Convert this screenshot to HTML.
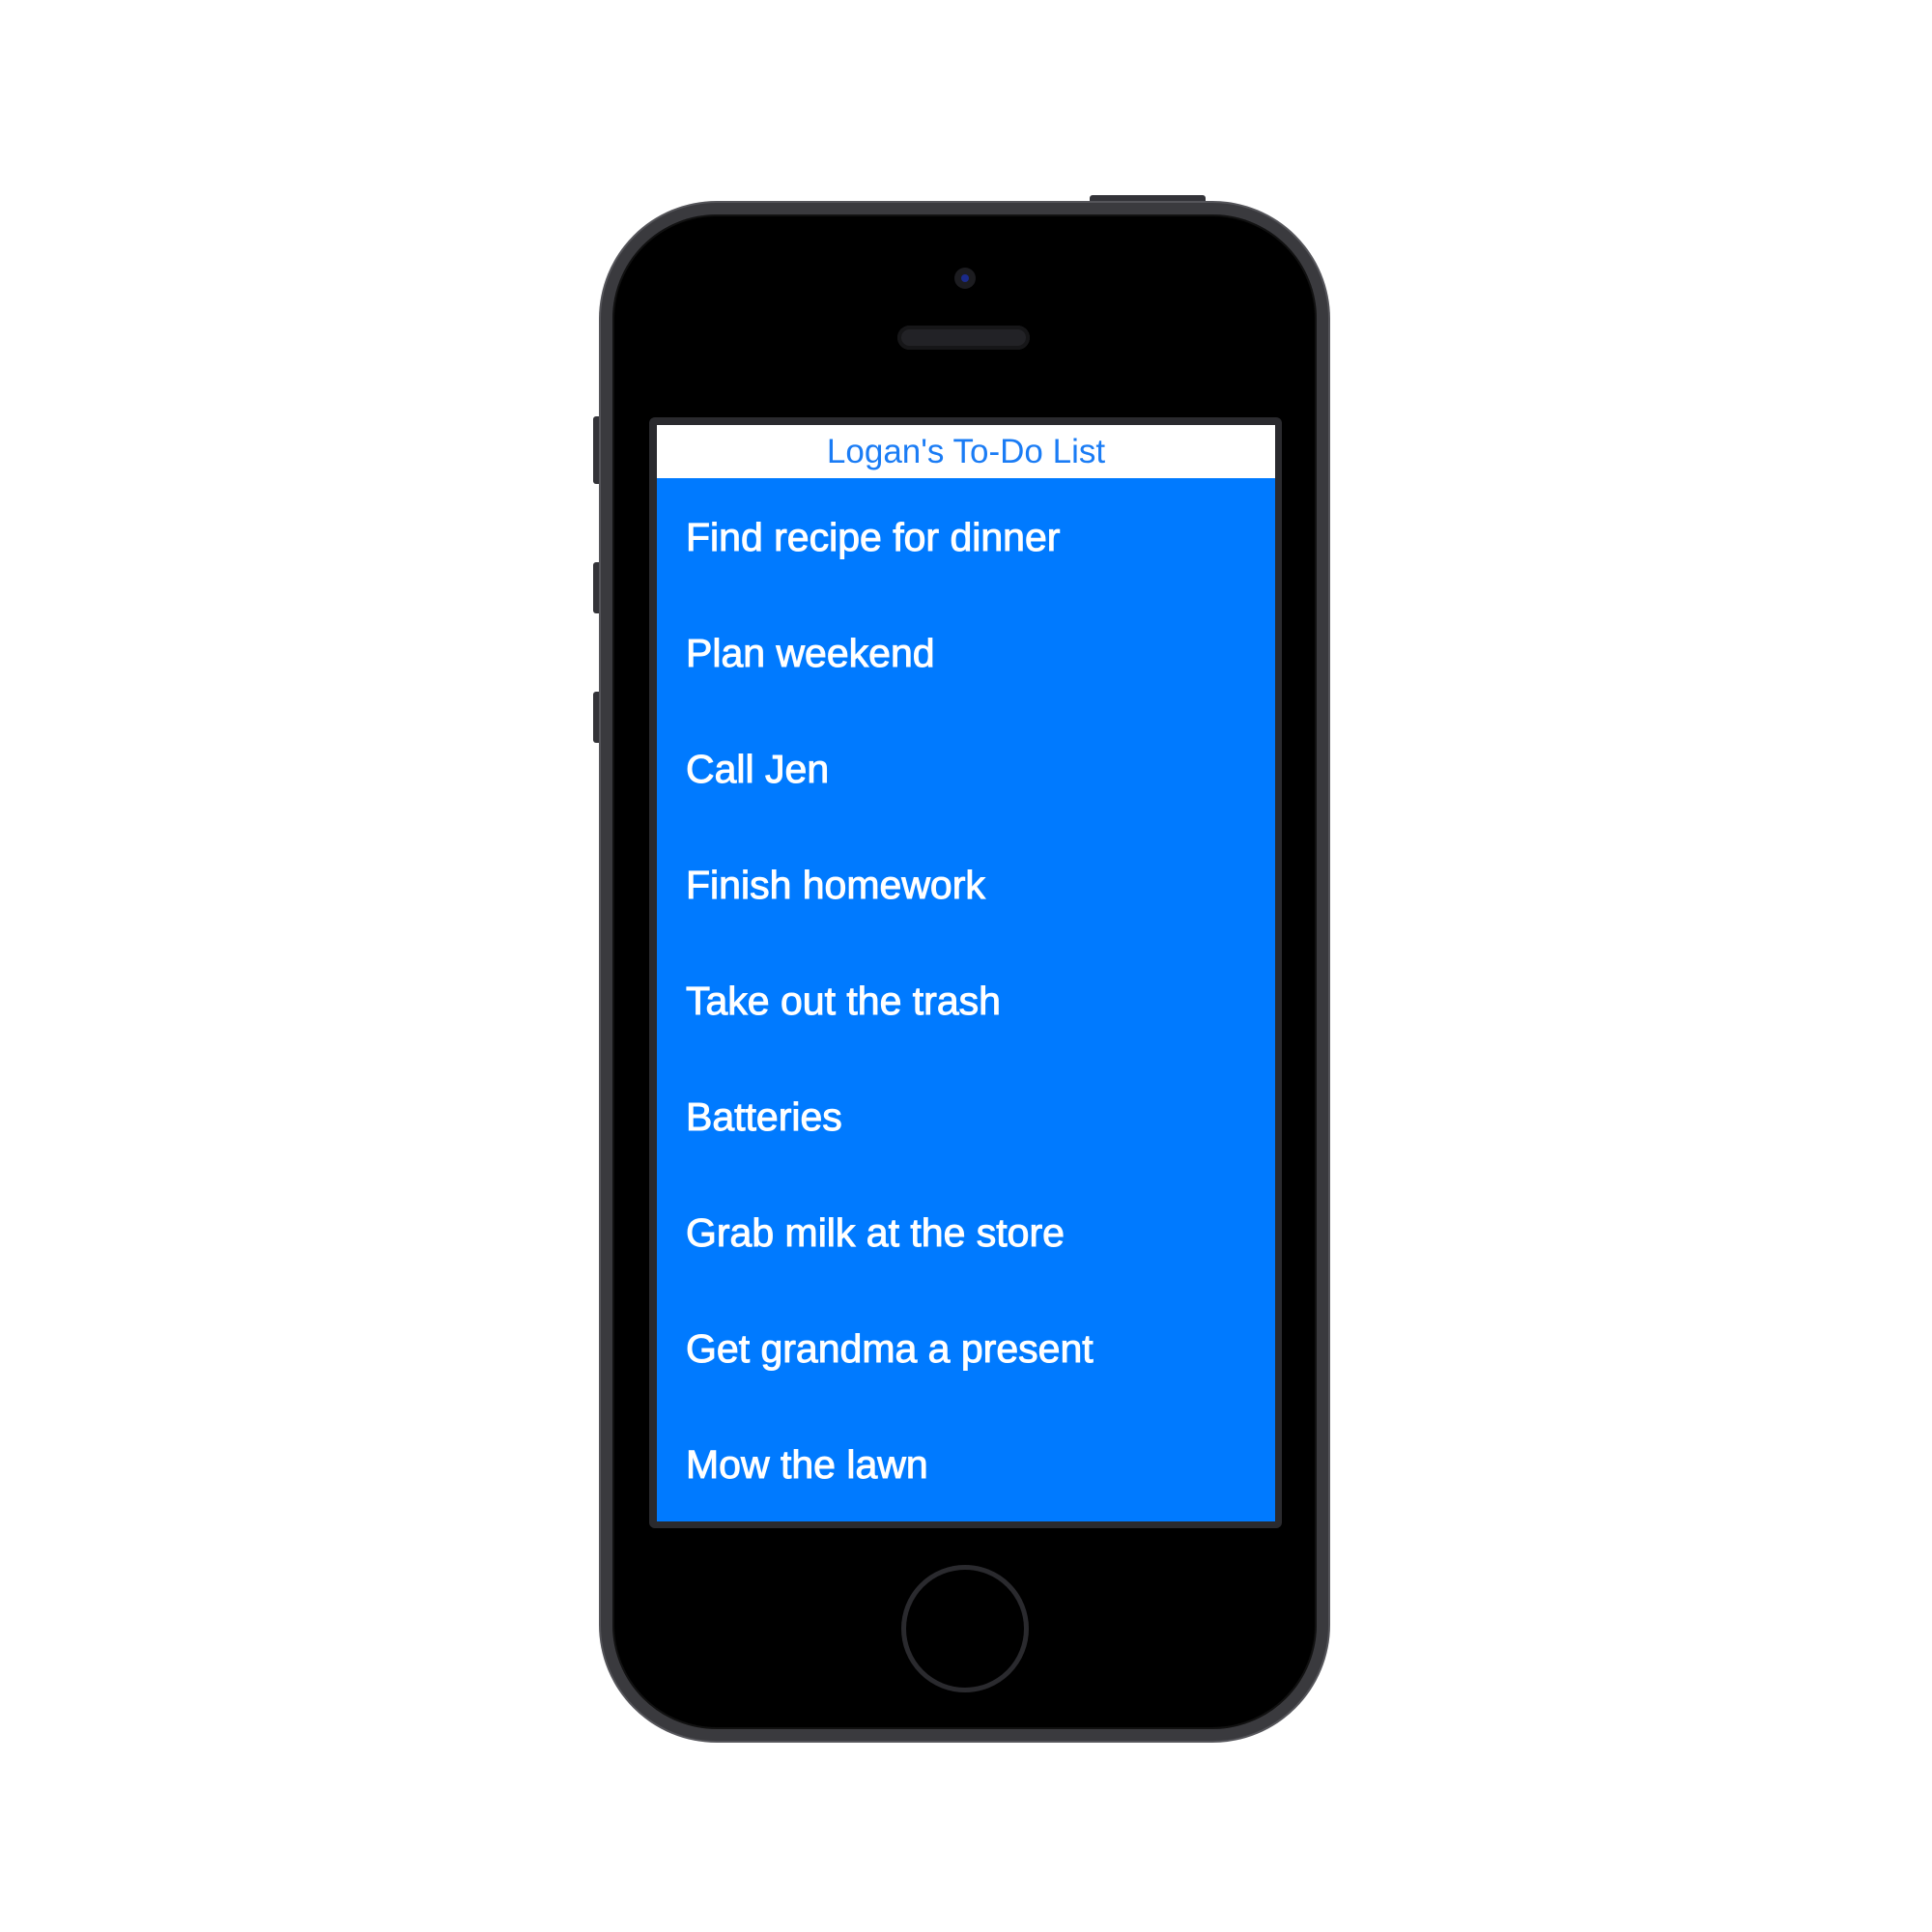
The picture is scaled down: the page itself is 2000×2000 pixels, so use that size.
<!DOCTYPE html>
<html><head><style>
html,body{margin:0;padding:0;background:#fff;width:2000px;height:2000px;overflow:hidden;font-family:"Liberation Sans",sans-serif}
.abs{position:absolute}
.phone{left:622px;top:210px;width:753px;height:1592px;border-radius:120px;background:#000;box-sizing:border-box;border:12px solid #3a3a3e;box-shadow:inset 0 0 0 2px #111, 0 0 0 2px #55555a}
.btn{background:#333338;border-radius:3px}
.bezel{left:672px;top:432px;width:655px;height:1150px;background:#2a2a2e;border-radius:6px}
.screen{left:680px;top:440px;width:640px;height:1135px;background:#007aff;overflow:hidden}
.hdr{left:0;top:0;width:640px;height:55px;background:#fff;color:#1a7cf5;font-size:35px;text-align:center;line-height:55px}
.item{left:30px;color:#fff;font-size:41px;line-height:50px;-webkit-text-stroke:1px #fff;white-space:nowrap}
</style></head><body>
<div class="abs btn" style="left:1128px;top:202px;width:120px;height:12px"></div>
<div class="abs btn" style="left:614px;top:431px;width:12px;height:70px"></div>
<div class="abs btn" style="left:614px;top:582px;width:12px;height:53px"></div>
<div class="abs btn" style="left:614px;top:716px;width:12px;height:53px"></div>
<div class="abs phone"></div>
<div class="abs" style="left:988px;top:277px;width:22px;height:22px;border-radius:50%;background:#1c1c20"></div>
<div class="abs" style="left:995px;top:284px;width:8px;height:8px;border-radius:50%;background:#1a2a8a"></div>
<div class="abs" style="left:929px;top:337px;width:137px;height:25px;border-radius:13px;background:#222226;box-shadow:inset 0 0 0 4px #161618"></div>
<div class="abs" style="left:933px;top:1620px;width:132px;height:132px;border-radius:50%;border:5px solid #2a2a2e;box-sizing:border-box"></div>
<div class="abs bezel"></div>
<div class="abs screen">
<div class="abs hdr">Logan's To-Do List</div>
<div class="abs item" style="top:91px">Find recipe for dinner</div>
<div class="abs item" style="top:211px">Plan weekend</div>
<div class="abs item" style="top:331px">Call Jen</div>
<div class="abs item" style="top:451px">Finish homework</div>
<div class="abs item" style="top:571px">Take out the trash</div>
<div class="abs item" style="top:691px">Batteries</div>
<div class="abs item" style="top:811px">Grab milk at the store</div>
<div class="abs item" style="top:931px">Get grandma a present</div>
<div class="abs item" style="top:1051px">Mow the lawn</div>
</div>
</body></html>
